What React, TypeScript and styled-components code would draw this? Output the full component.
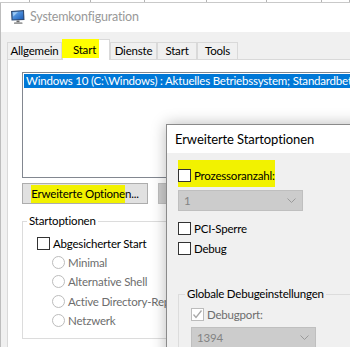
import styled, { createGlobalStyle } from "styled-components"

const GlobalStyle = createGlobalStyle`
  html, body {
    margin: 0;
    padding: 0;
  }
  body {
    font-family: Lato, "Liberation Sans", sans-serif;
    font-size: 11.5px;
    letter-spacing: -0.2px;
    color: #000;
    overflow: hidden;
  }
`

const Screen = styled.div`
  position: relative;
  width: 350px;
  height: 347px;
  overflow: hidden;
  background: #f0f0f0;
  display: flex;
  flex-direction: column;
`

const TopStrip = styled.div`
  flex: none;
  display: flex;
  height: 2px;
  background: #fff;
  border-bottom: 1px solid #c9c9c9;
`

const StripCell = styled.div<{ $w: number }>`
  flex: none;
  box-sizing: border-box;
  width: ${(p) => p.$w}px;
  border-right: 1px solid #b4b4b4;
`

const Window = styled.div`
  flex: 1;
  min-height: 0;
  display: flex;
  flex-direction: column;
  border-left: 1px solid #bdbdbd;
`

const TitleBar = styled.div`
  flex: none;
  height: 29px;
  display: flex;
  align-items: center;
  gap: 4px;
  padding: 0 0 2px 9px;
  box-sizing: border-box;
  background: #fff;
  color: #999;
  font-size: 12.5px;
`

const Body = styled.div`
  flex: 1;
  display: flex;
  flex-direction: column;
  padding: 7px 0 0 6px;
`

const TabRow = styled.div`
  flex: none;
  display: flex;
  align-items: flex-end;
  height: 20px;
  position: relative;
  z-index: 1;
`

const Tab = styled.div<{ $w: number; $active?: boolean }>`
  box-sizing: border-box;
  width: ${(p) => p.$w}px;
  height: ${(p) => (p.$active ? 21 : 17)}px;
  margin-bottom: ${(p) => (p.$active ? -1 : 0)}px;
  display: flex;
  align-items: center;
  justify-content: center;
  padding-bottom: ${(p) => (p.$active ? 3 : 1)}px;
  border: 1px solid #d9d9d9;
  border-bottom: none;
  background: ${(p) => (p.$active ? "#fff" : "#f0f0f0")};
`

const TabPage = styled.div`
  flex: 1;
  display: flex;
  flex-direction: column;
  align-items: flex-start;
  padding: 12px 0 0 14px;
  background: #fff;
  border-top: 1px solid #d9d9d9;
  border-left: 1px solid #d9d9d9;
`

const ListBox = styled.div`
  box-sizing: border-box;
  width: 420px;
  height: 106px;
  padding: 1px;
  border: 1px solid #828790;
  overflow: hidden;
`

const ListRow = styled.div<{ $selected?: boolean }>`
  height: 14px;
  line-height: 14px;
  padding-left: 2px;
  white-space: nowrap;
  background: ${(p) => (p.$selected ? "#0078d7" : "transparent")};
  color: ${(p) => (p.$selected ? "#fff" : "#000")};
`

const ButtonRow = styled.div`
  display: flex;
  gap: 10px;
  margin-top: 5px;
`

const Button = styled.div<{ $disabled?: boolean }>`
  box-sizing: border-box;
  width: 126px;
  height: 21px;
  display: flex;
  align-items: center;
  justify-content: center;
  background: ${(p) => (p.$disabled ? "#cccccc" : "#e1e1e1")};
  border: 1px solid ${(p) => (p.$disabled ? "#bfbfbf" : "#adadad")};
  white-space: nowrap;
`

const Mark = styled.span`
  background: #f2f200;
  padding: 2px 0 3px 0;
`

const TabMark = styled.span`
  background: #ffff00;
  padding: 4px 3px 2px 11px;
  margin-left: -11px;
`

const GroupBox = styled.fieldset<{ $w: number }>`
  box-sizing: border-box;
  width: ${(p) => p.$w}px;
  min-inline-size: 0;
  margin: 0;
  padding: 0;
  border: 1px solid #dcdcdc;
`

const Legend = styled.legend<{ $indent: number }>`
  margin-left: ${(p) => p.$indent}px;
  padding: 0 2px;
  line-height: 14px;
  font-size: 11.5px;
`

const GroupInner = styled.div<{ $pad: string }>`
  padding: ${(p) => p.$pad};
  display: flex;
  flex-direction: column;
  align-items: flex-start;
`

const CheckRow = styled.div<{ $h?: number; $disabled?: boolean }>`
  display: flex;
  align-items: center;
  gap: 2px;
  height: ${(p) => p.$h ?? 20}px;
  white-space: nowrap;
  color: ${(p) => (p.$disabled ? "#6d6d6d" : "#000")};
`

const HighlightRow = styled(CheckRow)`
  background: #f2f200;
  padding: 5px 0 2px 0;
  margin: -5px 0 -2px 0;
`

const Box = styled.span<{ $disabled?: boolean }>`
  box-sizing: border-box;
  flex: none;
  width: 13px;
  height: 13px;
  display: flex;
  align-items: center;
  justify-content: center;
  background: #fff;
  border: 1px solid ${(p) => (p.$disabled ? "#bcbcbc" : "#333")};
  margin-right: 1px;
`

const RadioList = styled.div`
  display: flex;
  flex-direction: column;
  margin-left: 15px;
`

const RadioRow = styled.div`
  display: flex;
  align-items: center;
  gap: 3px;
  height: 19.5px;
  color: #6d6d6d;
  white-space: nowrap;
`

const RadioCircle = styled.span`
  box-sizing: border-box;
  flex: none;
  width: 13px;
  height: 13px;
  border-radius: 50%;
  border: 1px solid #bcbcbc;
  background: #fff;
`

const Select = styled.div<{ $top: number }>`
  box-sizing: border-box;
  width: 125px;
  height: 21px;
  margin-top: ${(p) => p.$top}px;
  display: flex;
  align-items: center;
  justify-content: space-between;
  padding: 0 6px 0 5px;
  background: #cccccc;
  border: 1px solid #bfbfbf;
  color: #838383;
`

const Dialog = styled.div`
  position: absolute;
  left: 166px;
  top: 124px;
  box-sizing: border-box;
  width: 230px;
  height: 260px;
  display: flex;
  flex-direction: column;
  background: #f0f0f0;
  border: 1px solid #8a8a8a;
  box-shadow: 0 0 14px rgba(0, 0, 0, 0.28);
`

const DialogTitle = styled.div`
  flex: none;
  height: 28px;
  display: flex;
  align-items: center;
  padding-left: 8px;
  background: #fff;
  font-size: 13px;
  letter-spacing: -0.1px;
`

const DialogBody = styled.div`
  display: flex;
  flex-direction: column;
  align-items: flex-start;
  padding: 12px 0 0 11px;
`

const Spacer = styled.div<{ $h: number }>`
  height: ${(p) => p.$h}px;
`

const Check = ({ color }: { color: string }) => (
  <svg width="11" height="11" viewBox="0 0 11 11">
    <polyline points="1.5,5.5 4,8.5 9.5,1.5" fill="none" stroke={color} strokeWidth="1.3" />
  </svg>
)

const Chevron = () => (
  <svg width="9" height="6" viewBox="0 0 9 6">
    <polyline points="0.5,0.5 4.5,4.5 8.5,0.5" fill="none" stroke="#9a9a9a" strokeWidth="1" />
  </svg>
)

const AppIcon = () => (
  <svg width="16" height="16" viewBox="0 0 16 16">
    <defs>
      <linearGradient id="scr" x1="0" y1="0" x2="1" y2="1">
        <stop offset="0" stopColor="#6fb2f2" />
        <stop offset="1" stopColor="#1b5cb8" />
      </linearGradient>
    </defs>
    <path d="M1 2 L14 1 L14.5 11 L1.5 11.5 Z" fill="#2f4a72" />
    <path d="M2.3 3 L13 2.3 L13.3 10 L2.6 10.4 Z" fill="url(#scr)" />
    <path d="M3 3.4 L8 3.1 L3.3 7.5 Z" fill="#b9dcfb" opacity="0.7" />
    <rect x="6.5" y="11.5" width="3" height="2" fill="#6b6b6b" />
    <rect x="4" y="13.3" width="8.5" height="1.8" rx="0.6" fill="#9c9c9c" />
  </svg>
)

const stripCells = [30, 61, 54, 62, 60, 55, 28]

const tabs = [
  { label: "Allgemein", w: 55 },
  { label: "Start", w: 48, active: true },
  { label: "Dienste", w: 47 },
  { label: "Start", w: 40 },
  { label: "Tools", w: 41 },
]

const bootModes = ["Minimal", "Alternative Shell", "Active Directory-Reparatur", "Netzwerk"]

export default function App() {
  return (
    <>
      <GlobalStyle />
      <Screen>
        <TopStrip>
          {stripCells.map((w, i) => (
            <StripCell key={i} $w={w} />
          ))}
        </TopStrip>
        <Window>
          <TitleBar>
            <AppIcon />
            <span>Systemkonfiguration</span>
          </TitleBar>
          <Body>
            <TabRow>
              {tabs.map((t, i) => (
                <Tab key={i} $w={t.w} $active={t.active}>
                  {t.active ? <TabMark>{t.label}</TabMark> : t.label}
                </Tab>
              ))}
            </TabRow>
            <TabPage>
              <ListBox>
                <ListRow $selected>
                  Windows 10 (C:\Windows) : Aktuelles Betriebssystem; Standardbetriebssystem
                </ListRow>
              </ListBox>
              <ButtonRow>
                <Button>
                  <span>
                    <Mark>Erweiterte Optione</Mark>n...
                  </span>
                </Button>
                <Button $disabled />
              </ButtonRow>
              <Spacer $h={10} />
              <GroupBox $w={420}>
                <Legend $indent={4}>Startoptionen</Legend>
                <GroupInner $pad="5.5px 0 7px 14px">
                  <CheckRow $h={19}>
                    <Box />
                    Abgesicherter Start
                  </CheckRow>
                  <RadioList>
                    {bootModes.map((m) => (
                      <RadioRow key={m}>
                        <RadioCircle />
                        {m}
                      </RadioRow>
                    ))}
                  </RadioList>
                </GroupInner>
              </GroupBox>
            </TabPage>
          </Body>
        </Window>

        <Dialog>
          <DialogTitle>Erweiterte Startoptionen</DialogTitle>
          <DialogBody>
            <HighlightRow>
              <Box />
              Prozessoranzahl:
            </HighlightRow>
            <Select $top={5}>
              <span>1</span>
              <Chevron />
            </Select>
            <Spacer $h={7.5} />
            <CheckRow>
              <Box />
              PCI-Sperre
            </CheckRow>
            <CheckRow>
              <Box />
              Debug
            </CheckRow>
            <Spacer $h={28.5} />
            <GroupBox $w={200}>
              <Legend $indent={6}>Globale Debugeinstellungen</Legend>
              <GroupInner $pad="3px 0 0 12px">
                <CheckRow $disabled>
                  <Box $disabled>
                    <Check color="#a8a8a8" />
                  </Box>
                  Debugport:
                </CheckRow>
                <Select $top={3}>
                  <span>1394</span>
                  <Chevron />
                </Select>
              </GroupInner>
            </GroupBox>
          </DialogBody>
        </Dialog>
      </Screen>
    </>
  )
}
